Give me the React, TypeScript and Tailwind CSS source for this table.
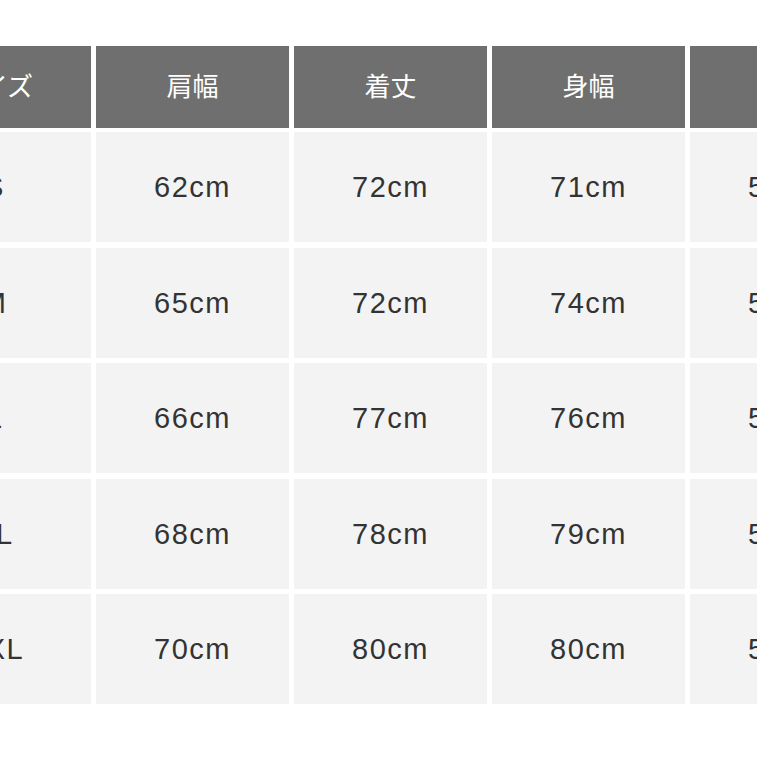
const headers = ['サイズ', '肩幅', '着丈', '身幅', '袖丈']
const rows = [
  ['S', '62cm', '72cm', '71cm', '56cm'],
  ['M', '65cm', '72cm', '74cm', '57cm'],
  ['L', '66cm', '77cm', '76cm', '58cm'],
  ['XL', '68cm', '78cm', '79cm', '59cm'],
  ['XXL', '70cm', '80cm', '80cm', '59cm'],
]

export default function App() {
  return (
    <div className="w-[757px] h-[757px] overflow-hidden bg-white pt-[46px]">
      <div className="ml-[-102px] w-[985px] flex flex-col gap-[4px]">
        <div className="grid grid-cols-[193px_193px_193px_193px_193px] gap-x-[5px]">
          {headers.map(h => (
            <div key={h} className="h-[82px] pb-[5px] bg-[#6f6f6f] flex items-center justify-center text-white text-[26px] font-['Noto_Sans_CJK_JP',sans-serif]">{h}</div>
          ))}
        </div>
        <div className="flex flex-col gap-[5.5px]">
          {rows.map(r => (
            <div key={r[0]} className="grid grid-cols-[193px_193px_193px_193px_193px] gap-x-[5px]">
              {r.map((v, i) => (
                <div key={i} className="h-[110px] pt-[2px] bg-[#f3f3f3] flex items-center justify-center text-[#333] text-[29px] tracking-[1.5px] font-['Liberation_Sans',Arial,sans-serif]">{v}</div>
              ))}
            </div>
          ))}
        </div>
      </div>
    </div>
  )
}
